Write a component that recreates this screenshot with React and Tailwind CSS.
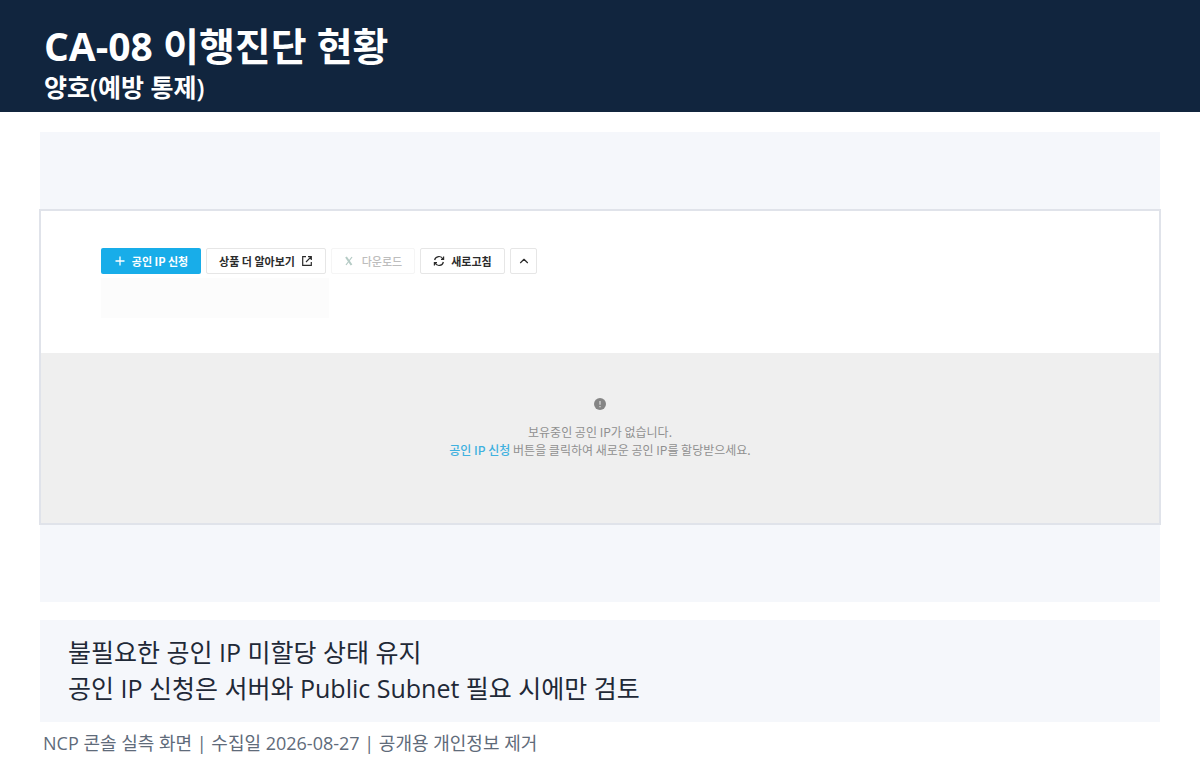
import React from "react";
import { ChevronUp } from "lucide-react";

const notes = [
  "불필요한 공인 IP 미할당 상태 유지",
  "공인 IP 신청은 서버와 Public Subnet 필요 시에만 검토",
];

const PlusIcon = () => (
  <svg viewBox="0 0 12 12" className="size-3" fill="none" stroke="currentColor">
    <path d="M6 1.5 V10.5 M1.5 6 H10.5" strokeWidth="1.3" />
  </svg>
);

const OpenIcon = () => (
  <svg viewBox="0 0 12 12" className="size-3" fill="none" stroke="currentColor">
    <path
      d="M5 1.7 H1.7 V10.3 H10.3 V7 M7 1.7 H10.3 V5 M10.3 1.7 L5 7"
      strokeWidth="1.2"
    />
  </svg>
);

const ExcelIcon = () => (
  <svg viewBox="0 0 10 10" className="size-2.5" fill="none">
    <path d="M2 1 L7.5 9" stroke="#b5cbc5" strokeWidth="2" />
    <path d="M8 1 L2 9" stroke="#b5cbc5" strokeWidth="1.2" />
  </svg>
);

const RefreshIcon = () => (
  <svg viewBox="0 0 12 12" className="size-3" fill="none" stroke="currentColor">
    <path
      d="M1.6 5 A4.5 4.5 0 0 1 10 4 M10.6 1.6 V4.3 H8 M10.4 7 A4.5 4.5 0 0 1 2 8 M1.4 10.4 V7.7 H4"
      strokeWidth="1.2"
    />
  </svg>
);

const ConsoleToolbar = () => {
  return (
    <div className="flex items-center text-[11px] leading-4 font-bold text-[#2b2b2b]">
      <button className="flex h-[26px] w-[100px] items-center justify-center gap-1.5 rounded-xs bg-[#18ade9] text-white">
        <PlusIcon />
        공인 IP 신청
      </button>
      <button className="ml-[5px] flex h-[26px] w-[120px] items-center justify-center gap-1.5 rounded-xs border border-[#e6e6e6] bg-white">
        상품 더 알아보기
        <OpenIcon />
      </button>
      <button
        className="ml-[5px] flex h-[26px] w-[84px] items-center justify-center gap-2 rounded-xs border border-[#f5f5f5] bg-white font-medium text-[#bdbdbd]"
        disabled
      >
        <ExcelIcon />
        다운로드
      </button>
      <button className="ml-[5px] flex h-[26px] w-[85px] items-center justify-center gap-1.5 rounded-xs border border-[#e6e6e6] bg-white">
        <RefreshIcon />
        새로고침
      </button>
      <button
        className="ml-[5px] flex h-[26px] w-[27px] items-center justify-center rounded-xs border border-[#e6e6e6] bg-white"
        aria-label="접기"
      >
        <ChevronUp className="size-3.5" />
      </button>
    </div>
  );
};

const EmptyState = () => {
  return (
    <div className="flex h-[170px] flex-col items-center bg-[#efefef] pt-[45px] text-xs leading-[18px] text-[#8f8f8f]">
      <svg viewBox="0 0 12 12" className="mb-[13px] size-3">
        <circle cx="6" cy="6" r="6" fill="#858585" />
        <path d="M6 3 V6.8 M6 8 V9.2" stroke="#d6d6d6" strokeWidth="1.3" />
      </svg>
      <p>보유중인 공인 IP가 없습니다.</p>
      <p>
        <a href="#" className="font-medium text-[#3fb1df]">
          공인 IP 신청
        </a>{" "}
        버튼을 클릭하여 새로운 공인 IP를 할당받으세요.
      </p>
    </div>
  );
};

const App = () => {
  return (
    <div className="bg-white font-['Open_Sans','Noto_Sans_CJK_KR',sans-serif]">
      <header className="h-28 bg-[#11253e] px-11 pt-[23px] text-white">
        <h1 className="text-[39px] leading-[46px] font-bold">
          CA-08 이행진단 현황
        </h1>
        <p className="text-[25px] leading-9 font-semibold">양호(예방 통제)</p>
      </header>

      <main className="px-10 pt-5">
        <section className="bg-[#f5f7fb] py-[77px]">
          <div className="-mx-px border-2 border-[#e0e3ea] bg-white font-['Noto_Sans_CJK_KR',sans-serif]">
            <div className="h-[142px] px-[60px] pt-[37px]">
              <ConsoleToolbar />
              <div className="mt-1 h-10 w-[228px] bg-[#fcfcfc]"></div>
            </div>
            <EmptyState />
          </div>
        </section>

        <section className="mt-[18px] h-[102px] bg-[#f5f7fb] px-7 pt-3.5 text-[25px] leading-9 text-[#1f2937]">
          {notes.map((note) => (
            <p key={note}>{note}</p>
          ))}
        </section>
      </main>

      <footer className="px-[43px] pt-2 text-lg leading-[26px] text-[#5f6b7a]">
        NCP 콘솔 실측 화면 | 수집일 2026-08-27 | 공개용 개인정보 제거
      </footer>
    </div>
  );
};

export default App;
